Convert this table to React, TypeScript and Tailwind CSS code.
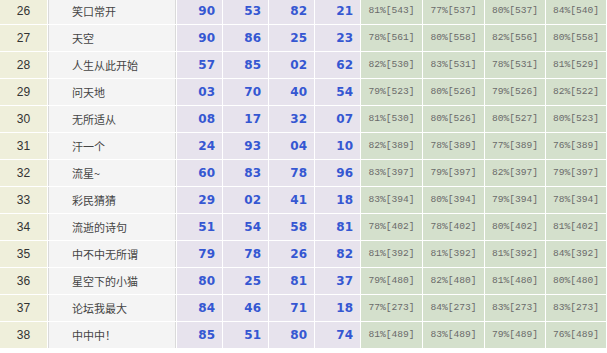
import React from "react";

type Row = [number, string, string[], string[]];

const rows: Row[] = [
  [26, "笑口常开", ["90", "53", "82", "21"], ["81%[543]", "77%[537]", "80%[537]", "84%[540]"]],
  [27, "天空", ["90", "86", "25", "23"], ["78%[561]", "80%[558]", "82%[556]", "80%[558]"]],
  [28, "人生从此开始", ["57", "85", "02", "62"], ["82%[530]", "83%[531]", "78%[531]", "81%[529]"]],
  [29, "问天地", ["03", "70", "40", "54"], ["79%[523]", "80%[526]", "79%[526]", "82%[522]"]],
  [30, "无所适从", ["08", "17", "32", "07"], ["81%[530]", "80%[526]", "80%[527]", "80%[523]"]],
  [31, "汗一个", ["24", "93", "04", "10"], ["82%[389]", "78%[389]", "77%[389]", "76%[389]"]],
  [32, "流星~", ["60", "83", "78", "96"], ["83%[397]", "79%[397]", "82%[397]", "79%[397]"]],
  [33, "彩民猜猜", ["29", "02", "41", "18"], ["83%[394]", "80%[394]", "79%[394]", "78%[394]"]],
  [34, "流逝的诗句", ["51", "54", "58", "81"], ["78%[402]", "78%[402]", "80%[402]", "81%[402]"]],
  [35, "中不中无所谓", ["79", "78", "26", "82"], ["81%[392]", "81%[392]", "81%[392]", "84%[392]"]],
  [36, "星空下的小猫", ["80", "25", "81", "37"], ["79%[480]", "82%[480]", "81%[480]", "80%[480]"]],
  [37, "论坛我最大", ["84", "46", "71", "18"], ["77%[273]", "84%[273]", "83%[273]", "83%[273]"]],
  [38, "中中中！", ["85", "51", "80", "74"], ["81%[489]", "83%[489]", "79%[489]", "76%[489]"]],
];

export default function App() {
  return (
    <div className="w-[607px] h-[353px] overflow-hidden bg-white">
      <div className="-mt-[2px] flex flex-col gap-y-[1px]">
        {rows.map(([n, name, nums, pcts]) => (
          <div
            key={n}
            className="grid h-[26px] grid-cols-[47px_128px_45px_45px_45px_45px_61px_61px_60px_60px] gap-x-[1px]"
          >
            <div className="flex items-center justify-center bg-[#efefdb] font-['Liberation_Sans',Arial,sans-serif] text-[12px] text-[#333]">
              {n}
            </div>
            <div className="flex items-center border-x border-[#dadada] bg-[#f4f4f4] pl-[23px] font-['Noto_Sans_CJK_SC','Liberation_Sans',sans-serif] text-[11px] text-[#444]">
              {name}
            </div>
            {nums.map((v, i) => (
              <div
                key={i}
                className="flex items-center justify-end bg-[#e7e3ed] pr-[7px] font-['DejaVu_Sans',Verdana,sans-serif] text-[12px] font-bold text-[#3557d2]"
              >
                {v}
              </div>
            ))}
            {pcts.map((v, i) => (
              <div
                key={i}
                className="flex items-center justify-center bg-[#d4e0cc] font-['Liberation_Mono','Courier_New',monospace] text-[9.6px] text-[#6a6a6a]"
              >
                {v}
              </div>
            ))}
          </div>
        ))}
      </div>
    </div>
  );
}
